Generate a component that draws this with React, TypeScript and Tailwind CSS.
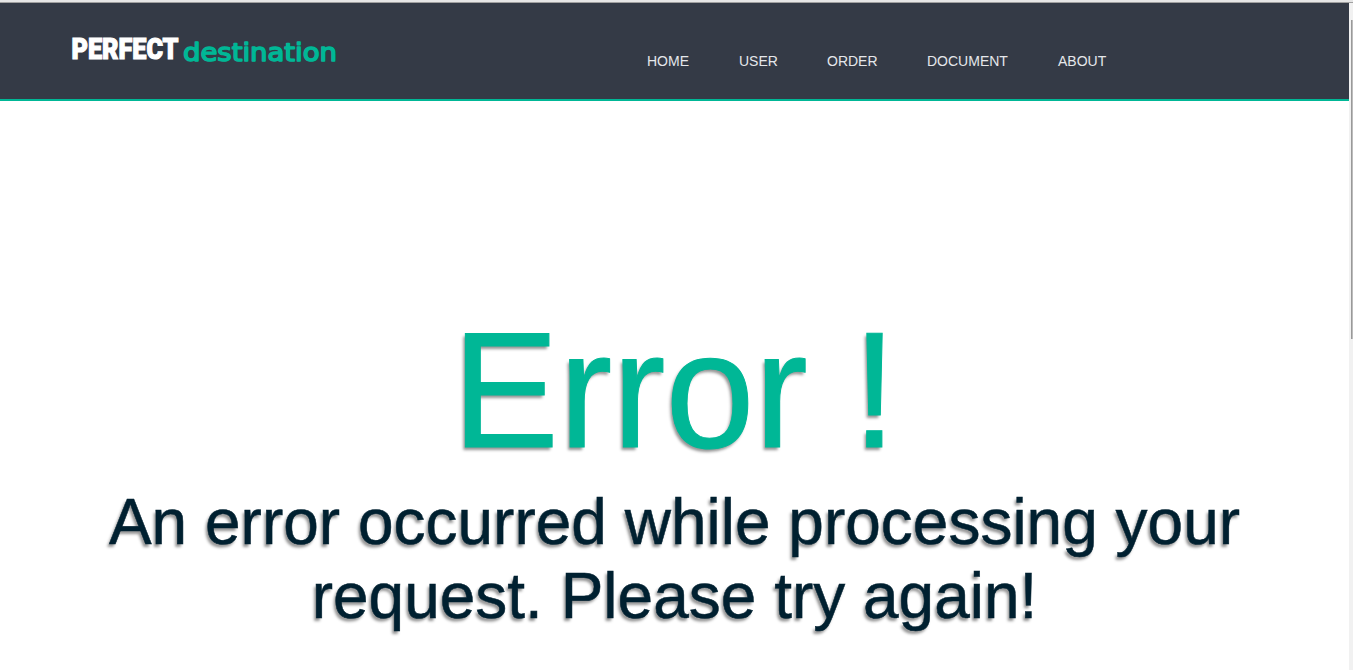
const links = [
  { label: 'HOME', width: 'w-[92px]' },
  { label: 'USER', width: 'w-[88px]' },
  { label: 'ORDER', width: 'w-[100px]' },
  { label: 'DOCUMENT', width: 'w-[131px]' },
  { label: 'ABOUT', width: 'w-[60px]' },
];

function Logo() {
  return (
    <svg className="ml-[70px] mt-[29px] h-[40px] w-[270px] shrink-0" viewBox="70 32 270 40" role="img" aria-label="Perfect destination">
      <text x="71.5" y="59" fill="#fff" stroke="#fff" strokeWidth="1.2" fontFamily="Roboto, sans-serif" fontWeight="900" fontSize="30" textLength="107" lengthAdjust="spacingAndGlyphs">PERFECT</text>
      <text x="183" y="61" fill="#00b796" stroke="#00b796" strokeWidth="1.5" strokeLinejoin="round" fontFamily="DejaVu Sans, sans-serif" fontSize="24.5" textLength="154" lengthAdjust="spacingAndGlyphs">destination</text>
    </svg>
  );
}

export default function App() {
  return (
    <div className="flex h-[670px] w-[1353px] flex-col overflow-hidden bg-white font-['Liberation_Sans',Arial,sans-serif]">
      <div className="h-[3px] shrink-0 border-b border-[#a0a0a0] bg-[#e6e6e6]" />
      <div className="flex min-h-0 flex-1">
        <div className="flex w-[1349px] shrink-0 flex-col">
          <header className="flex h-[98px] shrink-0 items-start border-b-2 border-[#00b796] bg-[#343a46]">
            <Logo />
            <nav className="ml-[307px] mt-[48px] flex text-sm leading-5 text-[#e5e7eb]">
              {links.map((link) => (
                <a key={link.label} className={link.width}>{link.label}</a>
              ))}
            </nav>
          </header>
          <main className="flex flex-col items-center pt-[204px] text-center">
            <h1 className="origin-bottom scale-y-[1.03] whitespace-pre text-[160px] leading-[176px] text-[#00b796] [-webkit-text-stroke:1px_#00b796] [text-shadow:-2px_3px_3px_rgba(0,0,0,0.42)]">Error !</h1>
            <p className="mt-[4px] whitespace-nowrap text-[64px] leading-[74px] text-[#002030] [-webkit-text-stroke:0.5px_#002030] [text-shadow:-2px_3px_3px_rgba(0,0,0,0.42)]">
              An error occurred while processing your<br />request. Please try again!
            </p>
          </main>
        </div>
        <div className="flex w-[4px] flex-col bg-[#f1f1f1] pl-[2px] pt-[17px]">
          <div className="h-[319px] border-l border-[#999] bg-[#bcbcbc]" />
        </div>
      </div>
    </div>
  );
}
